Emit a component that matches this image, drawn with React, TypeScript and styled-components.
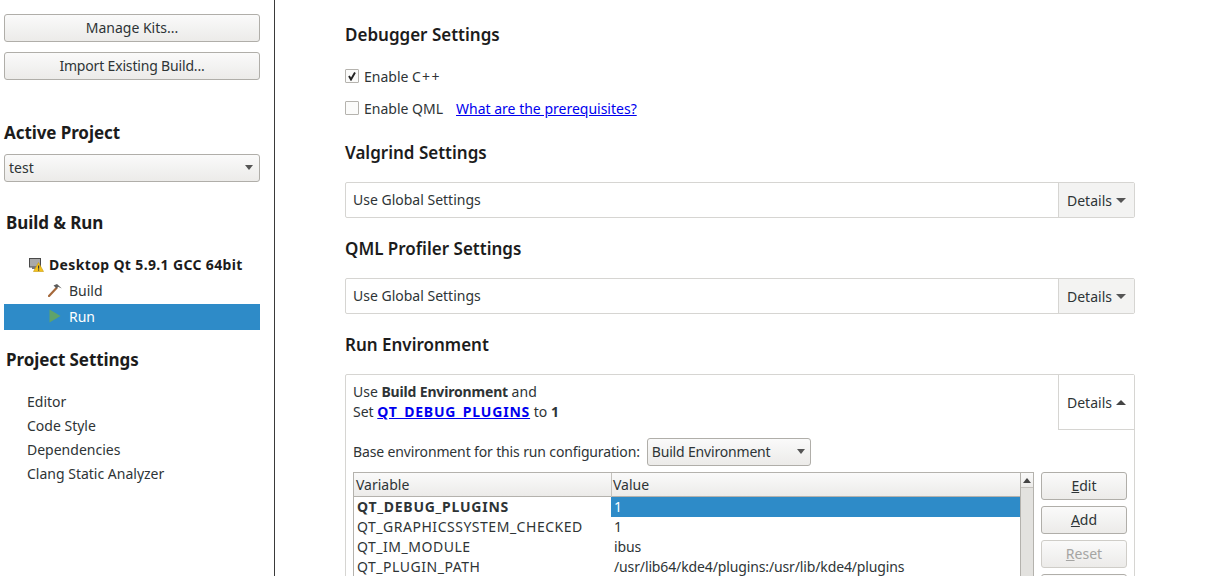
import React from 'react';
import styled, { createGlobalStyle } from 'styled-components';

const GlobalStyle = createGlobalStyle`
  html, body {
    margin: 0;
    height: 100%;
    overflow: hidden;
    background: #fff;
  }
  body {
    font-family: "Noto Sans", "Open Sans", sans-serif;
    font-size: 14px;
    color: #2e3436;
  }
`;

const Page = styled.div`
  display: flex;
  width: 1218px;
  height: 576px;
  overflow: hidden;
`;

const Sidebar = styled.aside`
  box-sizing: border-box;
  width: 275px;
  flex-shrink: 0;
  height: 576px;
  padding: 14px 14px 0 4px;
  border-right: 1px solid #3a3a3a;
  display: flex;
  flex-direction: column;
`;

const Button = styled.button<{ $disabled?: boolean }>`
  box-sizing: border-box;
  display: block;
  width: 100%;
  height: 28px;
  padding: 0;
  flex-shrink: 0;
  border: 1px solid ${(p) => (p.$disabled ? '#cfcdc8' : '#b0aea9')};
  border-radius: 3px;
  background: linear-gradient(#fafafa, #ecebe9);
  color: ${(p) => (p.$disabled ? '#a5a5a3' : '#2e3436')};
  font: inherit;
  line-height: 26px;
  text-align: center;
`;

const SideButton = styled(Button)<{ $tight?: boolean }>`
  margin-bottom: 10px;
  letter-spacing: ${(p) => (p.$tight ? '-0.17px' : '0')};
`;

const SideHeading = styled.h2<{ $indent?: number; $top: number }>`
  box-sizing: border-box;
  height: 24px;
  flex-shrink: 0;
  margin: ${(p) => p.$top}px 0 0 ${(p) => p.$indent ?? 0}px;
  padding-top: 1px;
  font-size: 17px;
  line-height: 24px;
  font-weight: 700;
  letter-spacing: -0.08px;
  color: #1c1c1c;
`;

const Combo = styled.div`
  box-sizing: border-box;
  display: flex;
  align-items: center;
  justify-content: space-between;
  height: 28px;
  flex-shrink: 0;
  padding: 0 6px 2px 4px;
  border: 1px solid #b0aea9;
  border-radius: 3px;
  background: linear-gradient(#fafafa, #ecebe9);
`;

const ProjectCombo = styled(Combo)`
  margin-top: 10px;
`;

const Caret = styled.span<{ $up?: boolean; $wide?: boolean }>`
  width: 0;
  height: 0;
  border-left: ${(p) => (p.$wide ? 5 : 4.5)}px solid transparent;
  border-right: ${(p) => (p.$wide ? 5 : 4.5)}px solid transparent;
  ${(p) => (p.$up ? 'border-bottom: 5px solid #444;' : 'border-top: 5px solid #555;')}
`;

const TargetRow = styled.div`
  box-sizing: border-box;
  display: flex;
  align-items: center;
  gap: 5px;
  height: 26px;
  flex-shrink: 0;
  margin-top: 18px;
  padding: 0 0 2px 25px;
  font-weight: 700;
  letter-spacing: 0.35px;
  color: #1c1c1c;
`;

const TreeRow = styled.div<{ $selected?: boolean }>`
  box-sizing: border-box;
  display: flex;
  align-items: center;
  gap: 5px;
  height: 26px;
  flex-shrink: 0;
  padding: 0 0 2px 42px;
  background: ${(p) => (p.$selected ? '#2e8bc8' : 'transparent')};
  color: ${(p) => (p.$selected ? '#fff' : '#2e3436')};
`;

const IconSlot = styled.span`
  width: 18px;
  display: flex;
  justify-content: center;
`;

const SettingsList = styled.ul`
  list-style: none;
  margin: 20px 0 0;
  padding: 0 0 0 23px;
`;

const SettingsItem = styled.li`
  height: 24px;
  line-height: 22px;
`;

const Main = styled.main`
  box-sizing: border-box;
  width: 790px;
  margin-left: 70px;
  padding-top: 22px;
  flex-shrink: 0;
`;

const Heading = styled.h2<{ $top: number }>`
  box-sizing: border-box;
  height: 24px;
  margin: ${(p) => p.$top}px 0 0;
  padding-top: 1px;
  font-size: 17px;
  line-height: 24px;
  font-weight: 600;
  color: #1c1c1c;
`;

const CheckRow = styled.label<{ $top: number }>`
  display: flex;
  align-items: center;
  height: 20px;
  margin-top: ${(p) => p.$top}px;
`;

const CheckBox = styled.span`
  box-sizing: border-box;
  width: 14px;
  height: 14px;
  margin-right: 5px;
  border: 1px solid #b5b3ae;
  border-radius: 1px;
  background: #fbfbfa;
  display: flex;
  align-items: center;
  justify-content: center;
`;

const Plus = styled.span`
  letter-spacing: 1.6px;
  margin-left: 1px;
`;

const HelpLink = styled.a`
  margin-left: 13px;
  color: #0000ee;
  text-decoration: underline;
`;

const Panel = styled.section<{ $top: number }>`
  box-sizing: border-box;
  margin-top: ${(p) => p.$top}px;
  border: 1px solid #d6d5d2;
  border-radius: 2px;
  background: #fff;
`;

const SummaryRow = styled.div`
  display: flex;
`;

const SummaryText = styled.div`
  flex: 1;
  padding: 7px 7px;
  line-height: 20px;
`;

const BoldName = styled.b`
  letter-spacing: -0.17px;
`;

const DetailsToggle = styled.div<{ $open?: boolean }>`
  box-sizing: border-box;
  width: 76px;
  display: flex;
  align-items: center;
  gap: 4px;
  padding-left: 8px;
  border-left: 1px solid #d6d5d2;
  background: ${(p) => (p.$open ? '#fff' : '#f3f3f2')};
  ${(p) => p.$open && 'border-bottom: 1px solid #d6d5d2; height: 55px;'}
`;

const CollapsedPanel = styled(Panel)`
  height: 36px;
  & ${SummaryRow} {
    height: 34px;
  }
  & ${SummaryText} {
    padding: 7px;
  }
`;

const EnvLink = styled.a`
  color: #0000ee;
  font-weight: 700;
  letter-spacing: 0.8px;
  text-decoration: underline;
`;

const BaseRow = styled.div`
  display: flex;
  align-items: center;
  height: 28px;
  margin: 8px 0 0 7px;
`;

const BaseLabel = styled.span`
  margin-bottom: 2px;
  letter-spacing: -0.14px;
`;

const BaseCombo = styled(Combo)`
  width: 164px;
  margin-left: 7px;
  padding-right: 5px;
  letter-spacing: -0.18px;
`;

const EnvBody = styled.div`
  display: flex;
  margin: 6px 0 0 7px;
`;

const TableFrame = styled.div`
  box-sizing: border-box;
  width: 681px;
  height: 130px;
  display: flex;
  border: 1px solid #b4b2ad;
  border-bottom: 0;
`;

const TableGrid = styled.div`
  flex: 1;
  min-width: 0;
`;

const HeaderRow = styled.div`
  display: grid;
  grid-template-columns: 257px 1fr;
  height: 23px;
  background: linear-gradient(#fafafa, #ecebe9);
  border-bottom: 1px solid #b4b2ad;
`;

const HeaderCell = styled.div<{ $divider?: boolean }>`
  padding-left: ${(p) => (p.$divider ? 1 : 2)}px;
  line-height: 24px;
  ${(p) => p.$divider && 'border-left: 1px solid #c4c2bd;'}
`;

const Row = styled.div`
  display: grid;
  grid-template-columns: 257px 1fr;
  height: 20px;
  line-height: 20px;
  white-space: nowrap;
`;

const NameCell = styled.div<{ $bold?: boolean }>`
  padding-left: 3px;
  font-weight: ${(p) => (p.$bold ? 700 : 400)};
  letter-spacing: ${(p) => (p.$bold ? 0.75 : 0.52)}px;
`;

const ValueCell = styled.div<{ $selected?: boolean }>`
  padding-left: 3px;
  letter-spacing: -0.13px;
  background: ${(p) => (p.$selected ? '#2e8bc8' : 'transparent')};
  color: ${(p) => (p.$selected ? '#fff' : 'inherit')};
`;

const Scrollbar = styled.div`
  width: 12px;
  flex-shrink: 0;
  background: #e3e2df;
  border-left: 1px solid #b4b2ad;
`;

const ScrollButton = styled.div`
  height: 14px;
  background: linear-gradient(#fafafa, #ecebe9);
  border-bottom: 1px solid #c4c2bd;
  display: flex;
  align-items: center;
  justify-content: center;
`;

const ButtonColumn = styled.div`
  width: 86px;
  margin-left: 7px;
  display: flex;
  flex-direction: column;
  gap: 6px;
`;

const Mnemonic = styled.span`
  text-decoration: underline;
`;

const DesktopIcon = () => (
  <svg width="15" height="15" viewBox="0 0 15 15">
    <rect x="0.5" y="1.5" width="11" height="8.5" fill="#a9a9a9" stroke="#4a4a4a" />
    <rect x="3" y="10" width="6" height="2" fill="#777" />
    <path d="M9.5 5.5 L14.5 14.5 H4.5 Z" fill="#f5c21b" stroke="#c89a10" strokeWidth="0.6" />
    <rect x="9" y="8.5" width="1.2" height="3.2" fill="#3a3a3a" />
    <rect x="9" y="12.4" width="1.2" height="1.2" fill="#3a3a3a" />
  </svg>
);

const HammerIcon = () => (
  <svg width="14" height="14" viewBox="0 0 14 14">
    <path d="M1 13 L8.5 5" stroke="#a5683a" strokeWidth="2.2" strokeLinecap="round" />
    <path d="M5.5 2.5 L9 1 L13.8 5.5 L10 3.8 L8.8 5.8 Z" fill="#5c5c5c" />
  </svg>
);

const RunIcon = () => (
  <svg width="12" height="14" viewBox="0 0 12 14">
    <path d="M0.5 0.5 L11.5 7 L0.5 13.5 Z" fill="#5fa36a" />
  </svg>
);

const envRows = [
  { name: 'QT_DEBUG_PLUGINS', value: '1', changed: true },
  { name: 'QT_GRAPHICSSYSTEM_CHECKED', value: '1' },
  { name: 'QT_IM_MODULE', value: 'ibus' },
  { name: 'QT_PLUGIN_PATH', value: '/usr/lib64/kde4/plugins:/usr/lib/kde4/plugins' },
];

const App: React.FC = () => {
  return (
    <Page>
      <GlobalStyle />
      <Sidebar>
        <SideButton>Manage Kits...</SideButton>
        <SideButton $tight>Import Existing Build...</SideButton>
        <SideHeading $top={30}>Active Project</SideHeading>
        <ProjectCombo>
          test
          <Caret />
        </ProjectCombo>
        <SideHeading $indent={2} $top={28}>Build &amp; Run</SideHeading>
        <TargetRow>
          <DesktopIcon />
          Desktop Qt 5.9.1 GCC 64bit
        </TargetRow>
        <TreeRow>
          <IconSlot><HammerIcon /></IconSlot>
          Build
        </TreeRow>
        <TreeRow $selected>
          <IconSlot><RunIcon /></IconSlot>
          Run
        </TreeRow>
        <SideHeading $indent={2} $top={17}>Project Settings</SideHeading>
        <SettingsList>
          <SettingsItem>Editor</SettingsItem>
          <SettingsItem>Code Style</SettingsItem>
          <SettingsItem>Dependencies</SettingsItem>
          <SettingsItem>Clang Static Analyzer</SettingsItem>
        </SettingsList>
      </Sidebar>
      <Main>
        <Heading $top={0}>Debugger Settings</Heading>
        <CheckRow $top={20}>
          <CheckBox>
            <svg width="10" height="10" viewBox="0 0 10 10">
              <path d="M2 5 L4 8.5 L8 1.5" fill="none" stroke="#222" strokeWidth="1.9" />
            </svg>
          </CheckBox>
          Enable C<Plus>++</Plus>
        </CheckRow>
        <CheckRow $top={12}>
          <CheckBox />
          Enable QML
          <HelpLink>What are the prerequisites?</HelpLink>
        </CheckRow>
        <Heading $top={22}>Valgrind Settings</Heading>
        <CollapsedPanel $top={18}>
          <SummaryRow>
            <SummaryText>Use Global Settings</SummaryText>
            <DetailsToggle>
              Details
              <Caret $wide />
            </DetailsToggle>
          </SummaryRow>
        </CollapsedPanel>
        <Heading $top={18}>QML Profiler Settings</Heading>
        <CollapsedPanel $top={18}>
          <SummaryRow>
            <SummaryText>Use Global Settings</SummaryText>
            <DetailsToggle>
              Details
              <Caret $wide />
            </DetailsToggle>
          </SummaryRow>
        </CollapsedPanel>
        <Heading $top={18}>Run Environment</Heading>
        <Panel $top={18}>
          <SummaryRow>
            <SummaryText>
              Use <BoldName>Build Environment</BoldName> and
              <br />
              Set <EnvLink>QT_DEBUG_PLUGINS</EnvLink> to <b>1</b>
            </SummaryText>
            <DetailsToggle $open>
              Details
              <Caret $up $wide />
            </DetailsToggle>
          </SummaryRow>
          <BaseRow>
            <BaseLabel>Base environment for this run configuration:</BaseLabel>
            <BaseCombo>
              Build Environment
              <Caret />
            </BaseCombo>
          </BaseRow>
          <EnvBody>
            <TableFrame>
              <TableGrid>
                <HeaderRow>
                  <HeaderCell>Variable</HeaderCell>
                  <HeaderCell $divider>Value</HeaderCell>
                </HeaderRow>
                {envRows.map((row) => (
                  <Row key={row.name}>
                    <NameCell $bold={row.changed}>{row.name}</NameCell>
                    <ValueCell $selected={row.changed}>{row.value}</ValueCell>
                  </Row>
                ))}
              </TableGrid>
              <Scrollbar>
                <ScrollButton>
                  <Caret $up />
                </ScrollButton>
              </Scrollbar>
            </TableFrame>
            <ButtonColumn>
              <Button><Mnemonic>E</Mnemonic>dit</Button>
              <Button><Mnemonic>A</Mnemonic>dd</Button>
              <Button $disabled><Mnemonic>R</Mnemonic>eset</Button>
              <Button />
            </ButtonColumn>
          </EnvBody>
        </Panel>
      </Main>
    </Page>
  );
};

export default App;
